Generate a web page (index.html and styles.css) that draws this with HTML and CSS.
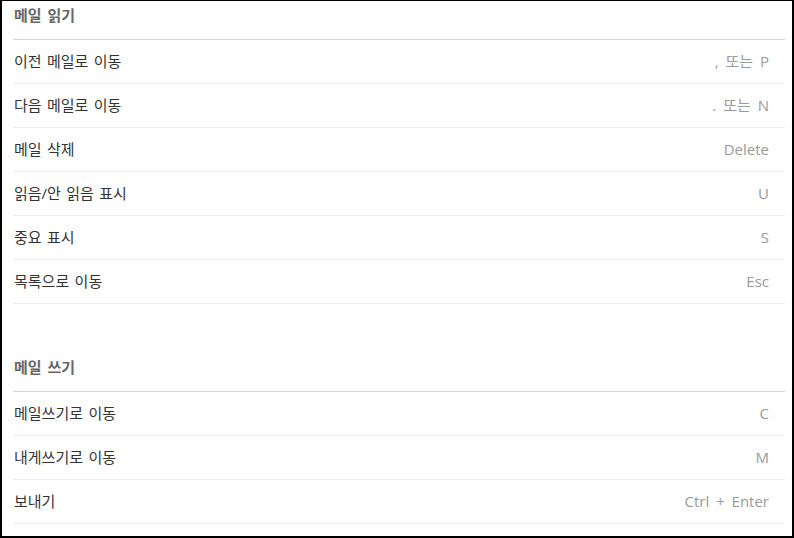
FILE: index.html
```html
<!DOCTYPE html>
<html lang="ko">
<head>
    <meta charset="UTF-8">
    <meta name="viewport" content="width=device-width, initial-scale=1.0">
    <title>단축키</title>
    <link rel="stylesheet" href="styles.css">
</head>
<body>
    <div class="shortcuts">
        <div class="section">
            <div class="section-title">메일 읽기</div>
            <div class="row"><span class="label">이전 메일로 이동</span><span class="key">, 또는 P</span></div>
            <div class="row"><span class="label">다음 메일로 이동</span><span class="key">. 또는 N</span></div>
            <div class="row"><span class="label">메일 삭제</span><span class="key">Delete</span></div>
            <div class="row"><span class="label">읽음/안 읽음 표시</span><span class="key">U</span></div>
            <div class="row"><span class="label">중요 표시</span><span class="key">S</span></div>
            <div class="row"><span class="label">목록으로 이동</span><span class="key">Esc</span></div>
        </div>
        <div class="section">
            <div class="section-title">메일 쓰기</div>
            <div class="row"><span class="label">메일쓰기로 이동</span><span class="key">C</span></div>
            <div class="row"><span class="label">내게쓰기로 이동</span><span class="key">M</span></div>
            <div class="row"><span class="label">보내기</span><span class="key">Ctrl + Enter</span></div>
        </div>
    </div>
</body>
</html>
```

FILE: styles.css
```css
/* Shortcut list */
body {
    margin: 0;
    font-family: "Open Sans", "Noto Sans CJK KR", sans-serif;
    font-size: 15px;
    background-color: #fff;
}

.shortcuts {
    box-sizing: border-box;
    height: 538px;
    border-style: solid;
    border-color: #000;
    border-width: 1px 2px 2px 2px;
    padding: 0 7px 0 11px;
    overflow: hidden;
}

.section + .section {
    margin-top: 49px;
}

.section-title {
    padding: 4px 0 14px 1px;
    line-height: 20px;
    font-weight: bold;
    color: #666;
    word-spacing: 2px;
    border-bottom: 1px solid #d5d5d5;
}

.row {
    display: flex;
    justify-content: space-between;
    align-items: center;
    padding: 11px 16px 12px 1px;
    line-height: 20px;
    border-bottom: 1px solid #eee;
}

.label {
    color: #333;
    word-spacing: 1.5px;
}

.key {
    color: #999;
    word-spacing: 3px;
}
```
